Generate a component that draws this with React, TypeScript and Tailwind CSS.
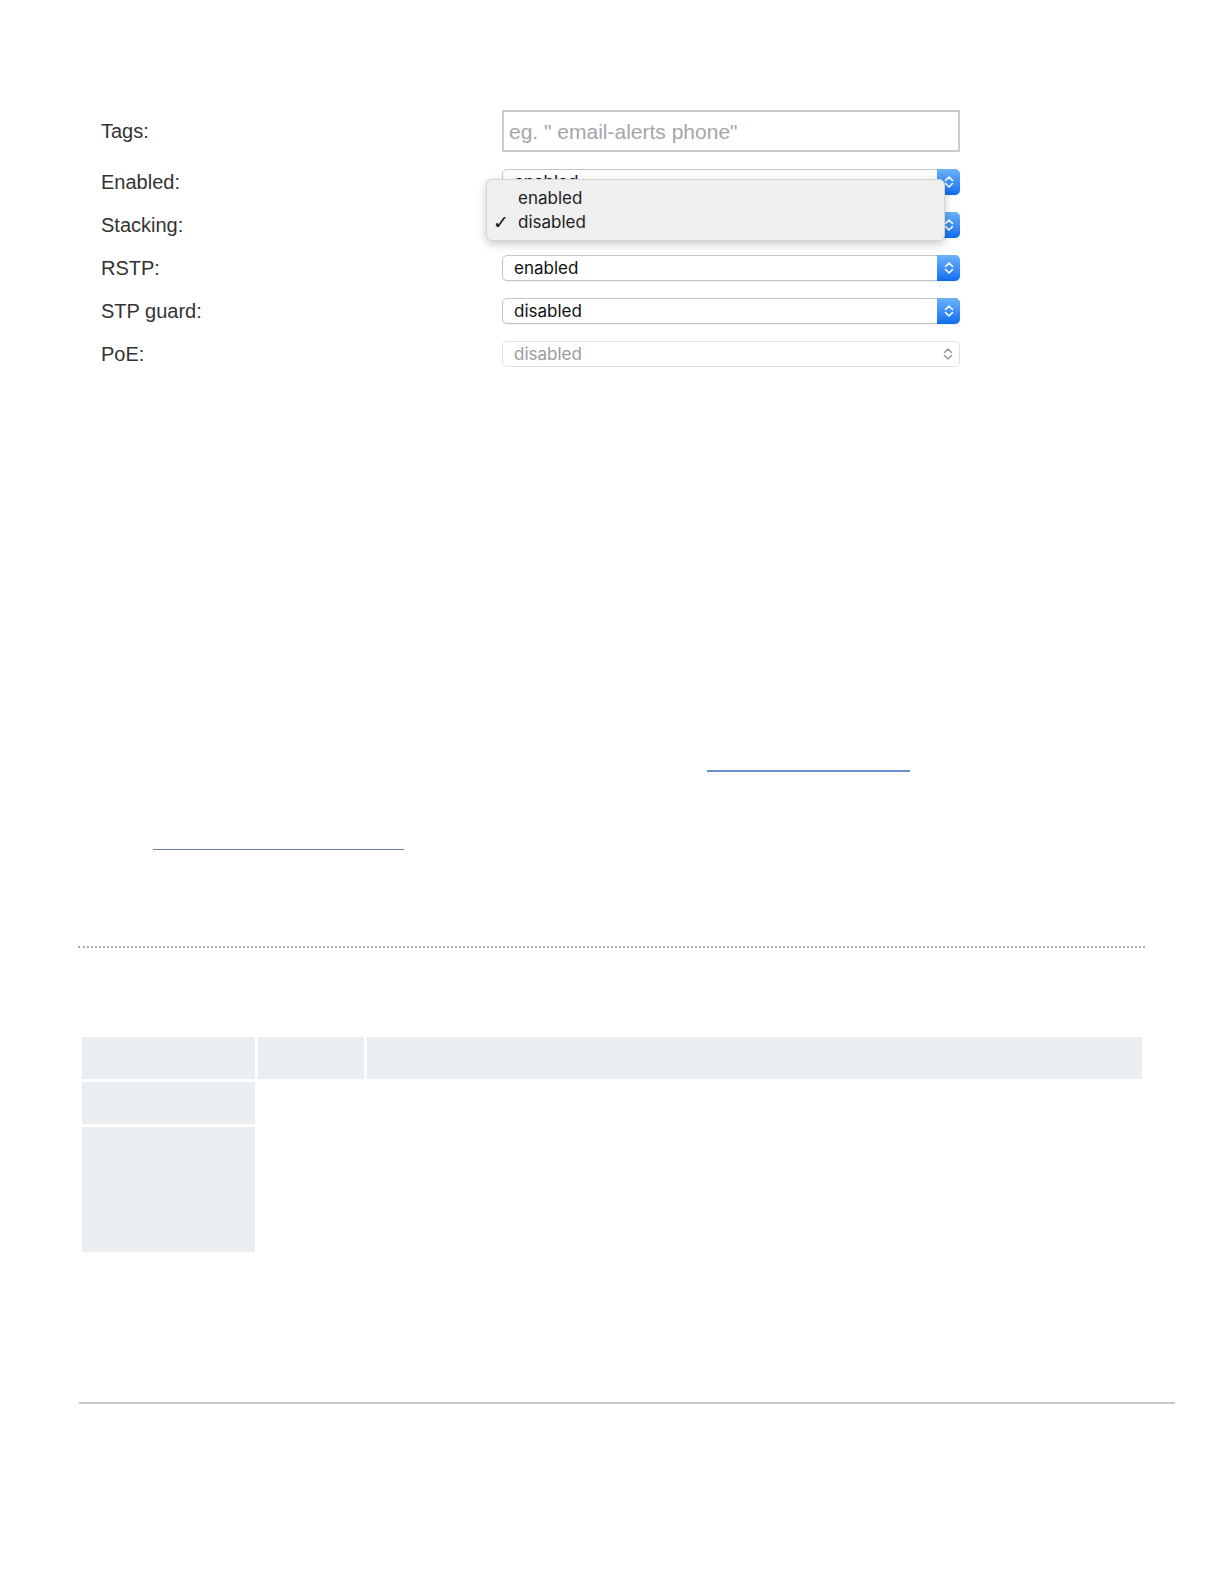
import React from "react";

const Chevrons = ({ color }: { color: string }) => (
  <svg width="12" height="18" viewBox="0 0 12 18" fill="none">
    <path d="M2.5 7.5 L6 4 L9.5 7.5" stroke={color} strokeWidth="1.6" strokeLinecap="round" strokeLinejoin="round" />
    <path d="M2.5 10.5 L6 14 L9.5 10.5" stroke={color} strokeWidth="1.6" strokeLinecap="round" strokeLinejoin="round" />
  </svg>
);

const Select = ({ value, disabled }: { value: string; disabled?: boolean }) => {
  if (disabled) {
    return (
      <div className="flex h-[26px] w-[458px] items-center justify-between rounded-[5px] border border-[#e2e2e2] bg-white">
        <span className="pl-[11px] font-['Inter',sans-serif] text-[17px] leading-none text-[#9a9a9a]">{value}</span>
        <span className="flex w-[23px] justify-center">
          <Chevrons color="#9c9c9c" />
        </span>
      </div>
    );
  }
  return (
    <div className="flex h-[26px] w-[458px] items-center justify-between rounded-[5px] border border-[#c4c4c4] bg-white shadow-[0_1px_1px_rgba(0,0,0,0.06)]">
      <span className="pl-[11px] font-['Inter',sans-serif] text-[17px] leading-none text-[#111]">{value}</span>
      <span className="-mr-px -my-px flex h-[26px] w-[23px] items-center justify-center rounded-r-[5px] bg-linear-to-b from-[#6ab3fb] to-[#0b6cef]">
        <Chevrons color="#ffffff" />
      </span>
    </div>
  );
};

const rows = [
  { label: "Enabled:", value: "enabled" },
  { label: "Stacking:", value: "disabled" },
  { label: "RSTP:", value: "enabled" },
  { label: "STP guard:", value: "disabled" },
  { label: "PoE:", value: "disabled", disabled: true },
];

export default function App() {
  return (
    <div className="min-h-[1584px] bg-white font-['Liberation_Sans',Arial,sans-serif] text-[#333]">
      <div className="ml-[78px] w-[1097px] pt-[110px]">
        {/* switch settings form */}
        <div className="relative pl-[23px]">
          <div className="grid grid-cols-[401px_458px] items-center gap-y-[17px]">
            <div className="text-[20px] leading-[26px] text-[#333]">Tags:</div>
            <div className="flex h-[42px] items-center border-2 border-[#cbcbcb] bg-white pl-[5px]">
              <span className="text-[21px] leading-none text-[#a6a6a6]">eg. " email-alerts phone"</span>
            </div>
            {rows.map((r) => (
              <React.Fragment key={r.label}>
                <div className="text-[20px] leading-[26px] text-[#333]">{r.label}</div>
                <Select value={r.value} disabled={r.disabled} />
              </React.Fragment>
            ))}
          </div>

          {/* open dropdown menu */}
          <div className="absolute left-[408px] top-[69px] h-[62px] w-[459px] rounded-[6px] border border-[#d4d4d4] bg-[#efefef] pt-[6px] shadow-[0_3px_10px_rgba(0,0,0,0.22)] font-['Inter',sans-serif] text-[17px] text-[#222]">
            <div className="relative h-[24px] pl-[31px] leading-[24px]">enabled</div>
            <div className="relative h-[24px] pl-[31px] leading-[24px]">
              <span className="absolute left-[6px] top-0 font-['DejaVu_Sans',sans-serif] text-[19px] font-bold leading-[24px] text-[#111]">✓</span>
              disabled
            </div>
          </div>
        </div>

        {/* link underlines */}
        <div className="mt-[403px] ml-[629px] h-[2px] w-[203px] bg-[#6a8dd0]" />
        <div className="mt-[77px] ml-[75px] h-px w-[251px] bg-[#6f7fa6]" />

        <div className="mt-[96px] w-[1067px] border-t-2 border-dotted border-[#a9a9a9]" />

        {/* table */}
        <div className="mt-[89px] ml-[4px] grid grid-cols-[173px_106px_775px] grid-rows-[42px_42px_125px] gap-[3px]">
          <div className="bg-[#ebeef0]" />
          <div className="bg-[#ebeef0]" />
          <div className="bg-[#ebeef0]" />
          <div className="bg-[#ebeef0]" />
          <div />
          <div />
          <div className="bg-[#ebeef0]" />
          <div />
          <div />
        </div>

        <div className="mt-[150px] ml-px h-[2px] w-[1096px] bg-[#c8c8c8]" />
      </div>
    </div>
  );
}
